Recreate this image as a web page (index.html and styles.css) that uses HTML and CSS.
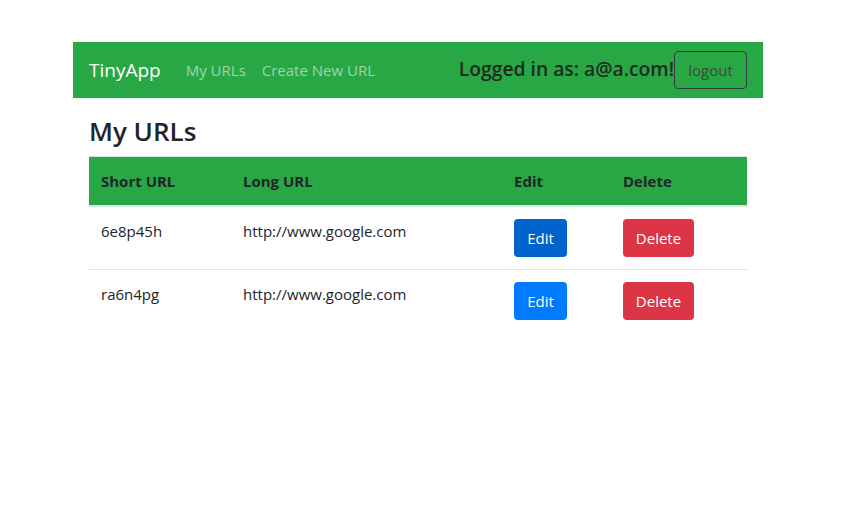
FILE: index.html
```html
<!DOCTYPE html>
<html>
<head>
<meta charset="utf-8">
<link rel="stylesheet" href="styles.css">
</head>
<body>
<div class="page">
  <nav class="navbar">
    <a class="brand">TinyApp</a>
    <div class="nav-links">
      <a class="nav-link">My URLs</a>
      <a class="nav-link">Create New URL</a>
    </div>
    <div class="user">
      <span class="logged">Logged in as: a@a.com!</span>
      <button class="btn-logout">logout</button>
    </div>
  </nav>
  <main class="content">
    <h3 class="title">My URLs</h3>
    <table class="urls">
      <thead>
        <tr>
          <th class="c1">Short URL</th>
          <th class="c2">Long URL</th>
          <th class="c3">Edit</th>
          <th class="c4">Delete</th>
        </tr>
      </thead>
      <tbody>
        <tr>
          <td>6e8p45h</td>
          <td>http://www.google.com</td>
          <td><button class="btn btn-edit focused">Edit</button></td>
          <td><button class="btn btn-delete">Delete</button></td>
        </tr>
        <tr>
          <td>ra6n4pg</td>
          <td>http://www.google.com</td>
          <td><button class="btn btn-edit">Edit</button></td>
          <td><button class="btn btn-delete">Delete</button></td>
        </tr>
      </tbody>
    </table>
  </main>
</div>
</body>
</html>
```
FILE: styles.css
```css
html, body {
  margin: 0;
  padding: 0;
  background: #fff;
}
body {
  font-family: "Open Sans", "Noto Sans", sans-serif;
  font-size: 15px;
  color: #212529;
}
.page {
  width: 690px;
  margin-left: 73px;
  padding-top: 42px;
}
.navbar {
  height: 56px;
  background: #28a745;
  display: flex;
  align-items: center;
  padding: 0 16px;
  box-sizing: border-box;
}
.brand {
  color: #fff;
  font-size: 19px;
  margin-right: 25px;
}
.nav-links {
  display: flex;
  gap: 16px;
}
.nav-link {
  color: rgba(255,255,255,0.55);
  font-size: 15px;
}
.user {
  margin-left: auto;
  display: flex;
  align-items: center;
}
.logged {
  font-size: 19.3px;
  font-weight: 600;
  color: #1e2a22;
  margin-bottom: 3px;
}
.btn-logout {
  font-family: inherit;
  font-size: 15px;
  color: #3d4a3f;
  background: transparent;
  border: 1px solid #343a40;
  border-radius: 4px;
  height: 38px;
  width: 73px;
  padding: 0;
  margin: 0;
}
.content {
  padding: 0 16px;
}
.title {
  font-size: 26px;
  font-weight: 600;
  margin: 17px 0 8px;
  line-height: 33px;
}
.urls {
  width: 658px;
  border-collapse: collapse;
}
.urls th {
  background: #28a745;
  text-align: left;
  font-weight: 700;
  padding: 12px 12px;
  line-height: 24px;
  border-top: 1px solid #dee2e6;
  border-bottom: 2px solid #dee2e6;
}
.c1 { width: 118px; }
.c2 { width: 247px; }
.c3 { width: 85px; }
.urls td {
  padding: 12px 12px;
  line-height: 24px;
  vertical-align: top;
  border-bottom: 1px solid #dee2e6;
}
.urls tbody tr:last-child td {
  border-bottom: none;
}
.btn {
  font-family: inherit;
  font-size: 15px;
  color: #fff;
  border: 1px solid transparent;
  border-radius: 4px;
  height: 38px;
  padding: 0;
  display: block;
  margin: 0;
}
.btn-edit { background: #007bff; width: 53px; }
.btn-edit.focused { background: #0062cc; }
.btn-delete { background: #dc3545; width: 71px; }
```
